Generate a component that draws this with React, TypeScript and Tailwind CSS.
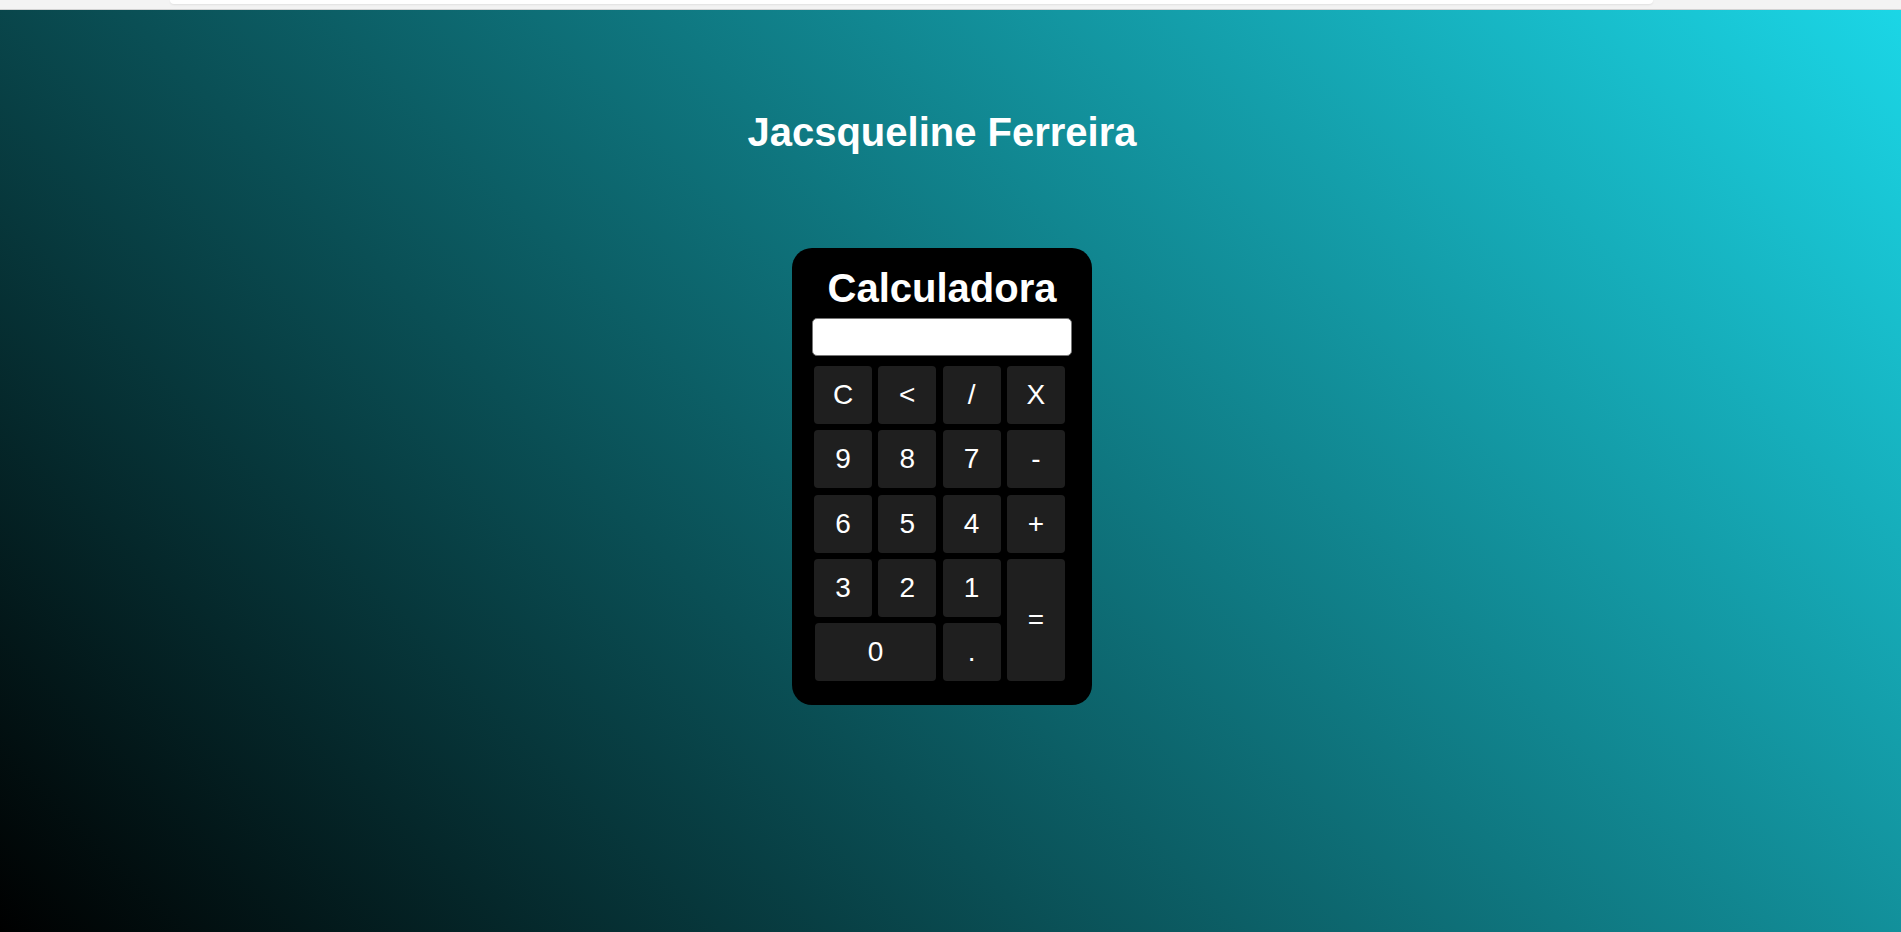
import React from "react";

const rows: { label: string; cls: string }[] = [
  { label: "C", cls: "" },
  { label: "<", cls: "" },
  { label: "/", cls: "" },
  { label: "X", cls: "" },
  { label: "9", cls: "" },
  { label: "8", cls: "" },
  { label: "7", cls: "" },
  { label: "-", cls: "" },
  { label: "6", cls: "" },
  { label: "5", cls: "" },
  { label: "4", cls: "" },
  { label: "+", cls: "" },
  { label: "3", cls: "" },
  { label: "2", cls: "" },
  { label: "1", cls: "" },
  { label: "=", cls: "row-span-2" },
  { label: "0", cls: "col-span-2 ml-[1px]" },
  { label: ".", cls: "" },
];

export default function App() {
  return (
    <div
      className="flex min-h-[932px] flex-col"
      style={{ fontFamily: '"Liberation Sans", Arial, sans-serif' }}
    >
      <div className="flex h-[10px] border-b border-[#d2d2d2] bg-[#f3f3f3] pl-[170px]">
        <div className="h-[4px] w-[1483px] rounded-b-[8px] bg-white shadow-[0_1px_2px_rgba(0,0,0,0.08)]" />
      </div>
      <main className="flex flex-1 flex-col items-center bg-[linear-gradient(45deg,#000,#1bd6e6)] pr-[17px]">
        <h1 className="mt-[99px] text-[40px] font-bold leading-[46px] text-white">
          Jacsqueline Ferreira
        </h1>
        <div className="mt-[93px] flex h-[457px] w-[300px] flex-col rounded-[20px] bg-black px-5 pt-[17px]">
          <h2 className="text-center text-[40px] font-bold leading-[46px] text-white">
            Calculadora
          </h2>
          <input
            type="text"
            readOnly
            className="mt-[7px] h-[38px] w-[260px] rounded-[5px] border border-[#767676] bg-white"
          />
          <div className="ml-[2px] mt-[10px] grid grid-cols-[repeat(4,58px)] grid-rows-[repeat(5,58px)] gap-[6.3px]">
            {rows.map((b) => (
              <button
                key={b.label}
                className={`flex items-center justify-center rounded-[4px] bg-[#1f1f1f] text-[28px] text-white ${b.cls}`}
              >
                {b.label}
              </button>
            ))}
          </div>
        </div>
      </main>
    </div>
  );
}
